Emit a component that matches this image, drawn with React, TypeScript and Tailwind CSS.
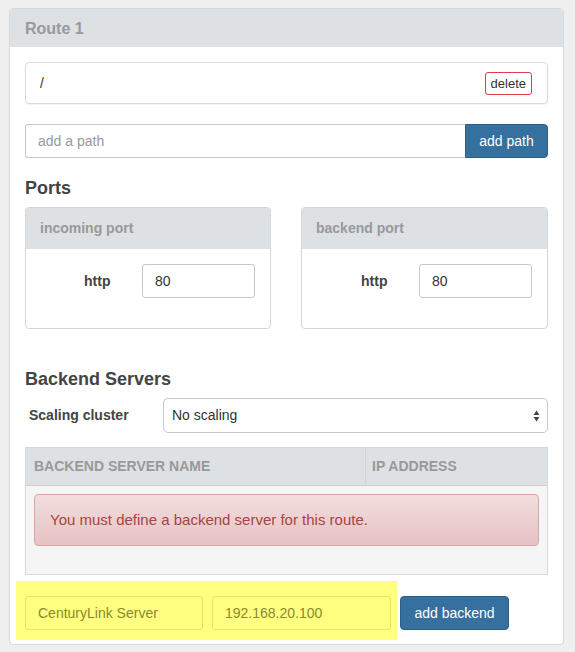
import { useState } from 'react';

const font = { fontFamily: '"Liberation Sans", Arial, sans-serif' };

function PortPanel({ title, width, labelOffset, value }: { title: string; width: string; labelOffset: string; value: string }) {
  return (
    <div className={`${width} rounded-[4px] border border-[#d6d6d6] bg-white overflow-hidden`}>
      <div className="h-[41px] bg-[#dde1e4] px-[14px] flex items-center text-[14px] font-bold text-[#999]">
        {title}
      </div>
      <div className="flex items-center pt-[15px] pb-[30px]">
        <span className={`${labelOffset} text-[14px] font-bold text-[#444]`}>http</span>
        <input
          defaultValue={value}
          className="ml-auto mr-[15px] w-[113px] h-[34px] rounded-[3px] border border-[#c8c8c8] px-[12px] text-[14px] text-[#333] outline-none"
        />
      </div>
    </div>
  );
}

export default function App() {
  const [path, setPath] = useState('');

  return (
    <div className="min-h-[652px] bg-[#efefef] pt-[8px] pl-[9px]" style={font}>
      <div className="w-[555px] rounded-[4px] border border-[#d8d8d8] bg-white overflow-hidden">
        {/* Header */}
        <div className="h-[38px] bg-[#dde1e4] px-[15px] pt-[1px] flex items-center text-[16px] font-bold text-[#999]">
          Route 1
        </div>

        <div className="px-[15px] pt-[15px] pb-[4px]">
          {/* Path list */}
          <div className="h-[42px] rounded-[4px] border border-[#d9d9d9] shadow-[0_1px_1px_rgba(0,0,0,0.05)] flex items-center pl-[14px] pr-[15px]">
            <span className="text-[14px] text-[#333]">/</span>
            <button className="ml-auto h-[23px] px-[5px] rounded-[3px] border border-[#e8394c] bg-white text-[13px] text-[#333] leading-none">
              delete
            </button>
          </div>

          {/* Add path */}
          <div className="mt-[20px] flex h-[34px]">
            <input
              value={path}
              onChange={(e) => setPath(e.target.value)}
              placeholder="add a path"
              className="flex-1 rounded-l-[3px] border border-r-0 border-[#c8c8c8] px-[12px] text-[14px] text-[#333] placeholder-[#999] outline-none"
            />
            <button className="w-[83px] rounded-r-[4px] border border-[#2c5f87] bg-[#35709e] text-[14px] text-white">
              add path
            </button>
          </div>

          {/* Ports */}
          <h3 className="mt-[19px] text-[18px] font-bold text-[#444] leading-[22px]">Ports</h3>
          <div className="mt-[8px] flex justify-between">
            <PortPanel title="incoming port" width="w-[246px]" labelOffset="ml-[58px]" value="80" />
            <PortPanel title="backend port" width="w-[247px]" labelOffset="ml-[59px]" value="80" />
          </div>

          {/* Backend servers */}
          <h3 className="mt-[39px] text-[18px] font-bold text-[#444] leading-[22px]">Backend Servers</h3>
          <div className="mt-[8px] flex items-center">
            <span className="w-[138px] pl-[4px] text-[14px] font-bold text-[#444]">Scaling cluster</span>
            <div className="flex-1 h-[35px] rounded-[5px] border border-[#c8c8c8] bg-white flex items-center pl-[8px] pr-[7px]">
              <span className="text-[14px] text-[#333]">No scaling</span>
              <svg className="ml-auto" width="7" height="12" viewBox="0 0 7 12">
                <path d="M3.5 0.5 L6.5 5 H0.5 Z" fill="#444" />
                <path d="M3.5 11.5 L6.5 7 H0.5 Z" fill="#444" />
              </svg>
            </div>
          </div>

          {/* Table */}
          <div className="mt-[14px] border border-[#d8d8d8]">
            <div className="flex h-[38px] bg-[#dde1e4] border-b border-[#d0d0d0] text-[14px] font-bold text-[#999]">
              <div className="w-[340px] border-r border-[#d0d4d7] px-[8px] flex items-center">BACKEND SERVER NAME</div>
              <div className="flex-1 px-[6px] flex items-center">IP ADDRESS</div>
            </div>
            <div className="bg-[#f5f5f5] px-[8px] pt-[8px] pb-[28px]">
              <div className="h-[52px] rounded-[4px] border border-[#d9a6a8] bg-gradient-to-b from-[#f2dede] to-[#e6c2c3] flex items-center px-[15px] text-[15px] text-[#a94442]">
                You must define a backend server for this route.
              </div>
            </div>
          </div>

          {/* Add backend */}
          <div className="mt-[6px] flex items-start">
            <div className="-ml-[9px] w-[381px] h-[59px] bg-[#ffff80] flex items-start pt-[15px] pl-[9px] gap-[9px]">
              <input
                defaultValue="CenturyLink Server"
                className="w-[178px] h-[34px] rounded-[3px] border border-[#e4e46c] bg-transparent px-[12px] text-[14px] text-[#8a892e] outline-none"
              />
              <input
                defaultValue="192.168.20.100"
                className="w-[179px] h-[34px] rounded-[3px] border border-[#e4e46c] bg-transparent px-[12px] text-[14px] text-[#8a892e] outline-none"
              />
            </div>
            <button className="ml-[3px] mt-[15px] w-[109px] h-[34px] rounded-[4px] border border-[#2c5f87] bg-[#35709e] text-[14px] text-white">
              add backend
            </button>
          </div>
        </div>
      </div>
    </div>
  );
}
